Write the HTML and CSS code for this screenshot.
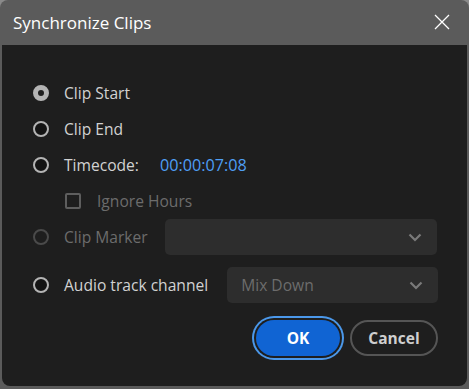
FILE: index.html
```html
<!DOCTYPE html>
<html>
<head>
	<title>Synchronize Clips</title>
	<link rel="stylesheet" href="styles.css">
</head>
<body>
	<div class="dialog">
		<div class="titlebar">
			<span class="title">Synchronize Clips</span>
			<svg class="close" width="16" height="16" viewBox="0 0 16 16">
				<path d="M1 1 L15 15 M15 1 L1 15" stroke="#ffffff" stroke-width="1.3" fill="none"/>
			</svg>
		</div>
		<div class="content">
			<div class="row">
				<span class="radio checked"></span>
				<span class="label">Clip Start</span>
			</div>
			<div class="row">
				<span class="radio"></span>
				<span class="label">Clip End</span>
			</div>
			<div class="row">
				<span class="radio"></span>
				<span class="label">Timecode:</span>
				<span class="timecode">00:00:07:08</span>
			</div>
			<div class="row sub">
				<span class="checkbox"></span>
				<span class="label disabled">Ignore Hours</span>
			</div>
			<div class="row">
				<span class="radio disabled"></span>
				<span class="label disabled">Clip Marker</span>
				<div class="select">
					<span class="value"></span>
					<svg class="chevron" width="14" height="9" viewBox="0 0 14 9"><path d="M1.5 1.5 L7 7 L12.5 1.5" stroke="#7a7a7a" stroke-width="2.2" fill="none"/></svg>
				</div>
			</div>
			<div class="row audio">
				<span class="radio"></span>
				<span class="label">Audio track channel</span>
				<div class="select wide">
					<span class="value">Mix Down</span>
					<svg class="chevron" width="14" height="9" viewBox="0 0 14 9"><path d="M1.5 1.5 L7 7 L12.5 1.5" stroke="#7a7a7a" stroke-width="2.2" fill="none"/></svg>
				</div>
			</div>
			<div class="buttons">
				<button class="btn ok">OK</button>
				<button class="btn cancel">Cancel</button>
			</div>
		</div>
	</div>
</body>
</html>
```

FILE: styles.css
```css
html { background: #8a8a8a; }
body {
	margin: 0;
	font-family: "Open Sans", "Noto Sans", sans-serif;
}
.dialog {
	width: 469px;
	height: 389px;
	background: #5b5b5b;
	border-radius: 8px 8px 0 0;
	display: flex;
	flex-direction: column;
}
.titlebar {
	height: 45px;
	display: flex;
	align-items: center;
	justify-content: space-between;
	padding: 0 19px 0 13px;
	flex: none;
}
.title { color: #ffffff; font-size: 17px; margin-top: -1px; }
.close { margin-top: -1px; }

.content {
	flex: 1;
	margin: 0 2px 3px 2px;
	background: #1e1e1e;
	border-radius: 0 0 8px 8px;
	padding: 30px 30px 0 31px;
	color: #d2d2d2;
	font-size: 15.6px;
}
.row {
	height: 36px;
	display: flex;
	align-items: center;
}
.row.sub { padding-left: 32px; }
.row.audio { margin-top: 12px; }

.radio {
	width: 16px;
	height: 16px;
	box-sizing: border-box;
	border: 2px solid #b4b4b4;
	border-radius: 50%;
	background: #141414;
	margin-right: 15px;
	flex: none;
}
.radio.checked { border-width: 5px; border-color: #b4b4b4; background: #1e1e1e; }
.radio.disabled { border-color: #4a4a4a; background: #1e1e1e; }
.checkbox {
	width: 16px;
	height: 16px;
	box-sizing: border-box;
	border: 2px solid #5e5e5e;
	border-radius: 2px;
	margin-right: 16px;
	flex: none;
}
.label { white-space: nowrap; }
.label.disabled { color: #6c6c6c; }
.timecode { color: #4f9ff5; margin-left: 21px; font-size: 16.2px; }

.select {
	flex: 1;
	height: 36px;
	margin-left: 17px;
	background: #2d2d2d;
	border-radius: 5px;
	display: flex;
	align-items: center;
	justify-content: space-between;
	padding: 0 15px 0 14px;
	box-sizing: border-box;
}
.select.wide { margin-left: 19px; margin-right: -1px; }
.select .value { color: #6c6c6c; }

.buttons {
	display: flex;
	justify-content: flex-end;
	align-items: center;
	gap: 10px;
	margin-top: 17px;
	margin-right: -1px;
}
.btn {
	font-family: inherit;
	font-size: 15.5px;
	font-weight: bold;
	height: 36px;
	border-radius: 18px;
	box-sizing: border-box;
}
.ok {
	width: 84px;
	background: #1064d3;
	color: #ffffff;
	border: none;
	box-shadow: 0 0 0 2px #1e1e1e, 0 0 0 4px #4b98ea;
	margin-right: 0;
}
.cancel {
	width: 88px;
	background: transparent;
	color: #cfcfcf;
	border: 2px solid #555555;
}
```
